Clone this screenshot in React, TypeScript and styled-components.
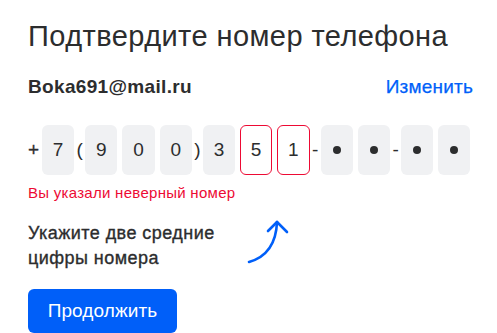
import styled, { createGlobalStyle } from "styled-components";

const GlobalStyle = createGlobalStyle`
  html, body {
    margin: 0;
    padding: 0;
    background: #ffffff;
  }
  body {
    font-family: "Liberation Sans", Arial, sans-serif;
    color: #2c2d2e;
  }
`;

const Page = styled.div`
  display: flex;
  flex-direction: column;
  padding: 18px 24px 0 28px;
  height: 333px;
  box-sizing: border-box;
  overflow: hidden;
`;

const Title = styled.h1`
  margin: 0;
  font-size: 29px;
  line-height: 36px;
  font-weight: 400;
  letter-spacing: 0.42px;
  color: #2c2d2e;
`;

const AccountRow = styled.div`
  display: flex;
  justify-content: space-between;
  align-items: baseline;
  margin-top: 21px;
  font-size: 19px;
  line-height: 24px;
`;

const Email = styled.span`
  font-weight: 700;
  letter-spacing: 0.33px;
  color: #2c2d2e;
`;

const ChangeLink = styled.a`
  color: #005ff9;
  text-decoration: none;
  letter-spacing: 0.2px;
  -webkit-text-stroke: 0.25px #005ff9;
  cursor: pointer;
`;

const PhoneRow = styled.div`
  display: flex;
  align-items: center;
  margin-top: 26px;
  font-size: 19px;
`;

const Plus = styled.span`
  width: 11.5px;
  color: #2c2d2e;
  -webkit-text-stroke: 0.3px #2c2d2e;
`;

const Sep = styled.span`
  width: 6px;
  text-align: center;
  color: #2c2d2e;
`;

const Cell = styled.div<{ $error?: boolean }>`
  display: flex;
  align-items: center;
  justify-content: center;
  width: 32.6px;
  height: 50px;
  margin: 0 2.5px;
  box-sizing: border-box;
  border-radius: 6px;
  background: ${(p) => (p.$error ? "#ffffff" : "#f0f1f3")};
  border: 1px solid ${(p) => (p.$error ? "#ed0a34" : "transparent")};
  color: #2c2d2e;
`;

const Dot = styled.span`
  width: 8px;
  height: 8px;
  border-radius: 50%;
  background: #2c2d2e;
`;

const ErrorText = styled.div`
  margin-top: 8px;
  font-size: 15px;
  line-height: 20px;
  letter-spacing: 0.28px;
  color: #ed0a34;
`;

const Hint = styled.div`
  display: flex;
  align-items: flex-start;
  margin-top: 18px;
`;

const HintText = styled.p`
  margin: 0;
  font-size: 18px;
  line-height: 25px;
  letter-spacing: 0.45px;
  -webkit-text-stroke: 0.35px #2c2d2e;
  color: #2c2d2e;
`;

const Arrow = styled.svg`
  margin-left: 30px;
  margin-top: -4px;
  flex-shrink: 0;
`;

const Button = styled.button`
  align-self: flex-start;
  margin-top: 18px;
  width: 149px;
  height: 50px;
  border: none;
  border-radius: 6px;
  background: #005ff9;
  color: #ffffff;
  font-family: "Liberation Sans", Arial, sans-serif;
  font-size: 19px;
  letter-spacing: 0.1px;
  cursor: pointer;
`;

type Slot =
  | { kind: "sep"; ch: string }
  | { kind: "digit"; ch: string; error?: boolean }
  | { kind: "dot" };

const slots: Slot[] = [
  { kind: "digit", ch: "7" },
  { kind: "sep", ch: "(" },
  { kind: "digit", ch: "9" },
  { kind: "digit", ch: "0" },
  { kind: "digit", ch: "0" },
  { kind: "sep", ch: ")" },
  { kind: "digit", ch: "3" },
  { kind: "digit", ch: "5", error: true },
  { kind: "digit", ch: "1", error: true },
  { kind: "sep", ch: "-" },
  { kind: "dot" },
  { kind: "dot" },
  { kind: "sep", ch: "-" },
  { kind: "dot" },
  { kind: "dot" },
];

export default function App() {
  return (
    <>
      <GlobalStyle />
      <Page>
        <Title>Подтвердите номер телефона</Title>
        <AccountRow>
          <Email>Boka691@mail.ru</Email>
          <ChangeLink>Изменить</ChangeLink>
        </AccountRow>
        <PhoneRow>
          <Plus>+</Plus>
          {slots.map((s, i) => {
            if (s.kind === "sep") return <Sep key={i}>{s.ch}</Sep>;
            if (s.kind === "dot")
              return (
                <Cell key={i}>
                  <Dot />
                </Cell>
              );
            return (
              <Cell key={i} $error={s.error}>
                {s.ch}
              </Cell>
            );
          })}
        </PhoneRow>
        <ErrorText>Вы указали неверный номер</ErrorText>
        <Hint>
          <HintText>
            Укажите две средние
            <br />
            цифры номера
          </HintText>
          <Arrow width="48" height="50" viewBox="0 0 48 50" fill="none">
            <path
              d="M4 45 C18 41 31 31 32 5"
              stroke="#005ff9"
              strokeWidth="2.6"
              strokeLinecap="round"
            />
            <path
              d="M23 14 L32 5 L42 15"
              stroke="#005ff9"
              strokeWidth="2.6"
              strokeLinecap="round"
              strokeLinejoin="round"
            />
          </Arrow>
        </Hint>
        <Button>Продолжить</Button>
      </Page>
    </>
  );
}
